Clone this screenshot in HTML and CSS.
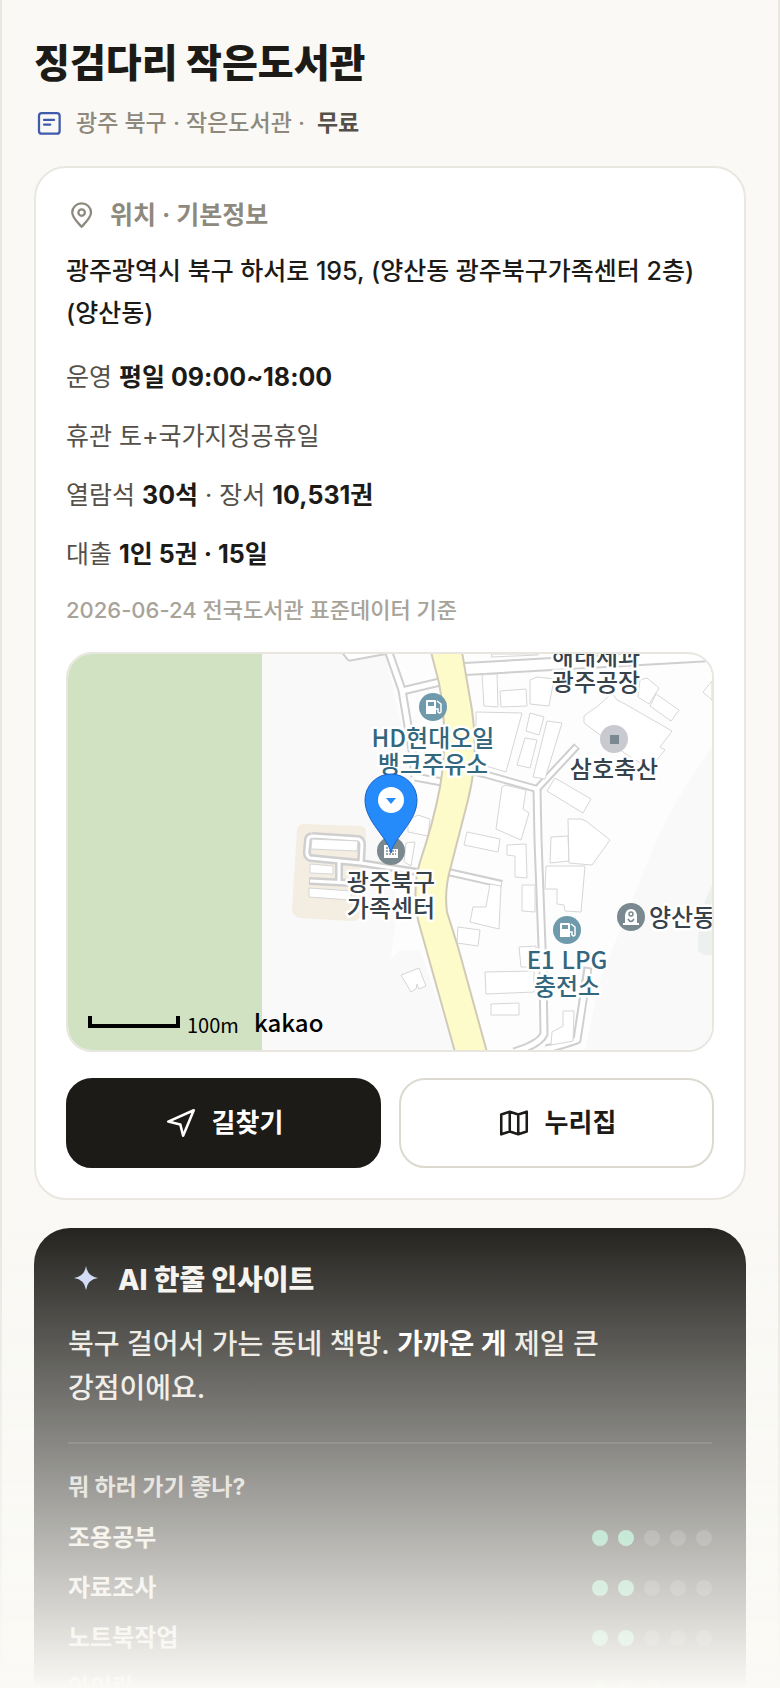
FILE: index.html
```html
<!DOCTYPE html>
<html lang="ko">

<head>
    <meta charset="UTF-8">
    <meta name="viewport" content="width=device-width, initial-scale=1.0">
    <title>징검다리 작은도서관</title>
    <link rel="stylesheet" href="styles.css">
</head>

<body>
    <main class="page">
        <h1>징검다리 작은도서관</h1>
        <p class="meta">
            <svg class="icon" viewBox="0 0 24 24" fill="none" stroke="#3f5bab" stroke-width="1.8" stroke-linecap="round">
                <rect x="4" y="4" width="16.5" height="16.5" rx="2.2" />
                <path d="M8 9.5h8M8 13.2h5" />
            </svg>
            <span>광주 북구 · 작은도서관 ·</span>
            <b>무료</b>
        </p>

        <section class="card">
            <h2 class="card-title">
                <svg class="icon" viewBox="0 0 24 24" fill="none" stroke="currentColor" stroke-width="1.8" stroke-linejoin="round">
                    <path d="M12.500 21.500C9.500 18 5 14 5 9.900a7.500 7.200 0 0 1 15 0C20 14 15.500 18 12.500 21.500z" />
                    <circle cx="12.500" cy="10" r="2.600" />
                </svg>
                위치 · 기본정보
            </h2>
            <p class="address">광주광역시 북구 하서로 195, (양산동 광주북구가족센터 2층) (양산동)</p>
            <div class="info">
                <p>운영 <b>평일 09:00~18:00</b></p>
                <p>휴관 토+국가지정공휴일</p>
                <p>열람석 <b>30석</b> · 장서 <b>10,531권</b></p>
                <p>대출 <b>1인 5권 · 15일</b></p>
            </div>
            <p class="source">2026-06-24 전국도서관 표준데이터 기준</p>

            <div class="map">
                <svg viewBox="68 654 644 396" preserveAspectRatio="xMidYMid slice" role="img" aria-label="지도">
                    <rect x="68" y="654" width="644" height="396" fill="#f9f9f9" />
                    <path d="M385 654H712V748Q672 800 645 868L600 980 585 1050H455L420 950 400 950 390 960 395 930V870L408 830 412 770z" fill="#fdfdfd" />
                    <path d="M712 885Q697 915 698 950Q700 956 712 955z" fill="#edf1ed" />
                    <rect x="68" y="654" width="194" height="396" fill="#d1e2c3" />
                    <path d="M303 824L360 826Q367 827 366 834L361 914Q360 921 352 921L300 918Q292 917 292 909L297 830Q298 824 303 824z" fill="#f4ede1" />

                    <!-- small streets: grey casing, then white core -->
                    <g fill="none" stroke-linejoin="round">
                        <g stroke="#cfcfcf">
                            <path stroke-width="14" d="M465 669L712 655" />
                            <path stroke-width="9" d="M388 650L402 690 412 750 415 777M402 691L440 682M415 777L442 782M343 648L350 657 388 650" />
                            <path stroke-width="8" d="M468 770L484 774 537 789 577 746" />
                            <path stroke-width="9" d="M537 789L538 840 543 973 544 1034Q540 1044 514 1052M588 967L577 1040Q560 1046 546 1049" />
                            <path stroke-width="8" d="M448 872L502 884" />
                            <path stroke-width="8" d="M312 836L358 839Q362 840 362 845L361 863 310 858Q306 856 307 850L308 840Q308 837 312 836M361 863L418 872M339 862V881M309 881L350 883" />
                        </g>
                        <g stroke="#fff">
                            <path stroke-width="10" d="M465 669L712 655" />
                            <path stroke-width="5" d="M388 650L402 690 412 750 415 777M402 691L440 682M415 777L442 782M343 648L350 657 388 650" />
                            <path stroke-width="4" d="M468 770L484 774 537 789 576 747" />
                            <path stroke-width="5" d="M537 789L538 840 543 973 544 1034Q540 1044 514 1052M588 969L577 1040Q560 1046 546 1049" />
                            <path stroke-width="4" d="M448 872L501 884" />
                            <path stroke-width="3" d="M312 836L358 839Q362 840 362 845L361 863 310 858Q306 856 307 850L308 840Q308 837 312 836M361 863L418 872M339 862V881M310 881L350 883" />
                        </g>
                    </g>

                    <!-- buildings -->
                    <g fill="#fff" stroke="#d6d6d6">
                        <path d="M482 675L497 674 498 707 484 706zM500 691L526 689 527 706 501 707zM530 680L537 677 554 679 549 706 530 704zM476 712L522 713 506 772 476 763z" />
                        <path d="M530 713L544 717 539 735 526 731zM525 738L537 740 530 768 517 765zM547 721L562 723 545 779 533 777zM502 787L505 785 526 790 523 809 529 813 521 840 496 829z" />
                        <path d="M467 832L500 839 498 852 464 845zM507 845L526 844 527 878 515 877 515 856 507 855zM555 778L591 799 583 813 547 791zM551 837L568 836 569 861 550 863z" />
                        <path d="M568 819L581 819 586 821 610 840 592 865 569 863zM546 866L585 866 581 912 565 911 564 905 557 904 557 889 545 889zM522 885L535 885 535 912 522 911z" />
                        <path d="M598 706L612 693 617 700 625 704 672 731 660 747 665 750 650 768 630 757 584 723 584 716 592 710zM640 680L647 678 659 688 649 704 638 697zM656 694L679 710 671 721 650 706zM703 692L712 681V700z" />
                        <path d="M490 884L501 886 499 929 470 922 473 907 486 907zM458 927L480 930 478 946 457 943zM485 972L534 971 534 992 486 994zM491 1004L519 1003 519 1015 491 1015zM519 947L536 946 536 967 521 967z" />
                        <path d="M563 1011L574 1011 573 1041 551 1045 552 1032 563 1026zM401 975L419 968 426 986 419 989 417 984 416 989 411 992zM408 820L418 815 430 819 428 836 408 832zM406 843L415 842 411 866 404 862zM492 654H538V655L491 657z" />
                        <path d="M312 839L358 841 357 851 311 849zM310 864L333 866 333 874 310 873zM309 888L352 891 350 900 309 897z" />
                    </g>

                    <!-- main road -->
                    <path d="M431 652L439 683Q449 735 440 787Q434 820 420 862Q412 888 418 920L455 1052H487L458 947 447 912Q444 890 451 866L468 800Q479 757 472 710L462 652z" fill="#fefbca" stroke="#d0cab9" stroke-width="2" />

                    <g class="poi-icon">
                        <circle cx="433" cy="707" r="14" fill="#6f9aac" />
                        <circle cx="567" cy="930" r="14" fill="#6f9aac" />
                        <circle cx="614" cy="739" r="14" fill="#c9cad0" />
                        <circle cx="631" cy="917" r="14" fill="#7a898f" />
                        <circle cx="391" cy="851" r="14" fill="#7a898f" />
                        <path d="M610 735h9v9h-9z" fill="#7a8a90" />
                        <g id="pump">
                            <path d="M426 714v-13q0-1 1-1h8q1 0 1 1v13z" fill="#fff" />
                            <path d="M428 702h6v4h-6z" fill="#6f9aac" />
                            <path d="M437 701l4 3v8q-1 2-3 0v-3h-2" fill="none" stroke="#fff" stroke-width="1.500" />
                        </g>
                        <use href="#pump" x="134" y="223" />
                        <path d="M623 925v-2h2v-8q1-6 6-6t6 6v8h2v2z" fill="#fff" />
                        <path d="M629 914a2 2 0 1 1 4 0a2 2 0 1 1-4 0M628 919q3 5 6 0" fill="none" stroke="#7a898f" stroke-width="1.500" />
                        <path d="M384 858v-13h7v4h7v9z" fill="#fff" />
                        <path d="M386 848h3M386 851h10M386 854h10" stroke="#7a898f" stroke-width="1.500" stroke-dasharray="2 1" />
                    </g>

                    <g class="poi poi-fuel">
                        <text x="433" y="747">HD현대오일</text>
                        <text x="433" y="773">뱅크주유소</text>
                        <text x="567" y="969">E1 LPG</text>
                        <text x="567" y="995">충전소</text>
                    </g>
                    <g class="poi">
                        <text x="596" y="665">해태제과</text>
                        <text x="596" y="691">광주공장</text>
                        <text x="614" y="778">삼호축산</text>
                        <text x="391" y="891">광주북구</text>
                        <text x="391" y="917">가족센터</text>
                        <text x="682" y="926">양산동</text>
                    </g>

                    <path d="M391 853C388 837 365 822 365 800a26 26 0 0 1 52 0C417 822 394 837 391 853z" fill="#258bfb" stroke="#1b62c8" />
                    <circle cx="391" cy="800" r="13" fill="#fff" />
                    <path d="M386 798h10l-5 6z" fill="#258bfb" />

                    <path d="M90 1016v10h88v-10" fill="none" stroke="#000" stroke-width="4" />
                    <text class="scale" x="187" y="1033">100m</text>
                    <text class="brand" x="254" y="1032">kakao</text>
                </svg>
            </div>

            <div class="actions">
                <a class="btn btn-dark" href="#">
                    <svg viewBox="0 0 24 24" fill="none" stroke="currentColor" stroke-width="1.800" stroke-linejoin="round">
                        <path d="M3 11L21 3 13.500 21 11.500 13z" />
                    </svg>
                    길찾기
                </a>
                <a class="btn" href="#">
                    <svg viewBox="0 0 24 24" fill="none" stroke="currentColor" stroke-width="1.800" stroke-linejoin="round">
                        <path d="M3 6l6-2 6 2 6-2v14l-6 2-6-2-6 2zM9 4v14M15 6v14" />
                    </svg>
                    누리집
                </a>
            </div>
        </section>

        <section class="insight">
            <h2 class="insight-title">
                <svg viewBox="0 0 36 36" fill="#cdd8f6">
                    <path d="M18 4Q19.500 14.500 30 16Q19.500 17.500 18 28Q16.500 17.500 6 16Q16.500 14.500 18 4z" />
                </svg>
                AI 한줄 인사이트
            </h2>
            <p class="insight-text">북구 걸어서 가는 동네 책방. <b>가까운 게</b> 제일 큰 강점이에요.</p>
            <div class="scores">
                <h3>뭐 하러 가기 좋나?</h3>
                <ul>
                    <li>조용공부 <span class="dots"><i class="on"></i><i class="on"></i><i></i><i></i><i></i></span></li>
                    <li>자료조사 <span class="dots"><i class="on"></i><i class="on"></i><i></i><i></i><i></i></span></li>
                    <li>노트북작업 <span class="dots"><i class="on"></i><i class="on"></i><i></i><i></i><i></i></span></li>
                    <li>아이랑 <span class="dots"><i class="on"></i><i class="on"></i><i class="on"></i><i></i><i></i></span></li>
                </ul>
            </div>
        </section>
    </main>
    <div class="fade"></div>
</body>

</html>
```

FILE: styles.css
```css
* {
    box-sizing: border-box;
}

body {
    margin: 0;
    background-color: #faf9f5;
    color: #1c1b17;
    font-family: Inter, "Noto Sans CJK KR", sans-serif;
    word-break: keep-all;
}

h1,
h2,
h3,
p,
ul {
    margin: 0;
    padding: 0;
}

.page {
    height: 100vh;
    overflow: hidden;
    padding: 36px 32px 0;
    border-left: 2px solid #e9e7e0;
    border-right: 2px solid #e9e7e0;
}

h1 {
    font-size: 39px;
    font-weight: 800;
    line-height: 54px;
}

.icon {
    width: 30px;
    height: 30px;
    flex: none;
}

.meta {
    display: flex;
    align-items: center;
    gap: 12px;
    margin: 16px 0 26px;
    font-size: 23px;
    font-weight: 500;
    line-height: 34px;
    color: #8e897d;
}

.meta b {
    font-weight: 700;
    color: #55514a;
}

.card {
    padding: 30px;
    background-color: #fff;
    border: 2px solid #e9e7e0;
    border-radius: 32px;
}

.card-title {
    display: flex;
    align-items: center;
    gap: 14px;
    font-size: 25px;
    font-weight: 700;
    line-height: 34px;
    color: #8e897d;
}

.address {
    margin-top: 18px;
    font-size: 25px;
    font-weight: 500;
    line-height: 42px;
}

.info {
    display: grid;
    gap: 23px;
    margin-top: 25px;
    font-size: 25px;
    line-height: 36px;
    color: #55514a;
}

.info b {
    font-weight: 700;
    color: #1c1b17;
}

.source {
    margin-top: 21px;
    font-size: 22px;
    font-weight: 500;
    line-height: 34px;
    color: #a8a399;
}

.map {
    height: 400px;
    margin-top: 25px;
    overflow: hidden;
    border: 2px solid #e9e6e0;
    border-radius: 26px;
}

.map svg {
    display: block;
    width: 100%;
    height: 100%;
}

.poi {
    font-family: "Noto Sans CJK KR", sans-serif;
    font-size: 24px;
    font-weight: 500;
    text-anchor: middle;
    fill: #37424b;
    stroke: #fff;
    stroke-width: 5px;
    stroke-linejoin: round;
    paint-order: stroke;
}

.poi-fuel {
    fill: #33677d;
}

.scale {
    font-family: "Noto Sans CJK KR", sans-serif;
    font-size: 20px;
}

.brand {
    font-family: "Noto Sans CJK KR", sans-serif;
    font-size: 24px;
    font-weight: 500;
}

.actions {
    display: grid;
    grid-template-columns: 1fr 1fr;
    gap: 18px;
    margin-top: 26px;
}

.btn {
    display: flex;
    align-items: center;
    justify-content: center;
    gap: 14px;
    height: 90px;
    border: 2px solid #dcd9d0;
    border-radius: 26px;
    color: #1c1b17;
    font-size: 26px;
    font-weight: 700;
    line-height: 34px;
    text-decoration: none;
}

.btn svg {
    width: 34px;
    height: 34px;
}

.btn-dark {
    background-color: #1c1b17;
    border-color: #1c1b17;
    color: #fff;
}

.insight {
    margin-top: 28px;
    padding: 34px;
    background-color: #1c1b17;
    border-radius: 36px;
    color: #f5f3ee;
}

.insight-title {
    display: flex;
    align-items: center;
    gap: 14px;
    font-size: 28px;
    font-weight: 800;
    line-height: 36px;
}

.insight-title svg {
    width: 36px;
    height: 36px;
}

.insight-text {
    margin-top: 24px;
    font-size: 28px;
    font-weight: 500;
    line-height: 44px;
    color: #ebe8e0;
}

.insight-text b {
    font-weight: 700;
    color: #fff;
}

.scores {
    margin-top: 32px;
    padding-top: 26px;
    border-top: 2px solid rgba(255, 255, 255, 0.12);
}

.scores h3 {
    font-size: 23px;
    font-weight: 700;
    line-height: 34px;
    color: #d0cdc4;
}

.scores ul {
    display: grid;
    gap: 16px;
    margin-top: 17px;
    list-style: none;
}

.scores li {
    display: flex;
    align-items: center;
    justify-content: space-between;
    font-size: 24px;
    font-weight: 600;
    line-height: 34px;
    color: #ebe8e0;
}

.dots {
    display: flex;
    gap: 10px;
}

.dots i {
    width: 16px;
    height: 16px;
    border-radius: 50%;
    background-color: rgba(255, 255, 255, 0.16);
}

.dots .on {
    background-color: #5cc496;
}

/* lower part of the page fades into the background */
.fade {
    position: fixed;
    left: 0;
    right: 0;
    bottom: 0;
    height: 480px;
    background: linear-gradient(rgba(250, 249, 245, 0), #faf9f5);
    pointer-events: none;
}
```
